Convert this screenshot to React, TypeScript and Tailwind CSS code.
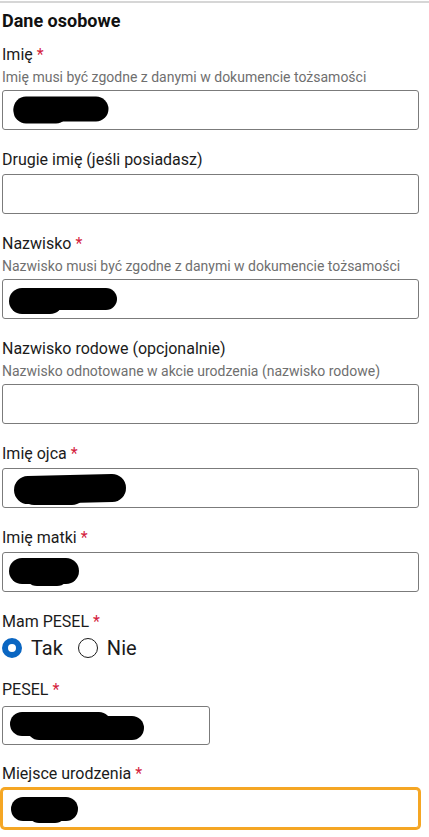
import React from 'react';

type Stroke = [number, number, number, number, number];

interface BlobSpec {
  left: number;
  top: number;
  w: number;
  h: number;
  strokes: Stroke[];
}

// black marker scribbles that hide the entered values
function Blob({ spec, id }: { spec: BlobSpec; id: string }) {
  return (
    <svg
      width={spec.w}
      height={spec.h}
      viewBox={`0 0 ${spec.w} ${spec.h}`}
      style={{ marginLeft: spec.left, marginTop: spec.top }}
      className="block"
    >
      <defs>
        <filter id={id} filterUnits="userSpaceOnUse" x="0" y="0" width={spec.w} height={spec.h}>
          <feGaussianBlur stdDeviation="0.7" />
        </filter>
      </defs>
      <g filter={`url(#${id})`} stroke="#000" strokeLinecap="round" fill="none">
        {spec.strokes.map(([x1, y1, x2, y2, sw], i) => (
          <line key={i} x1={x1} y1={y1} x2={x2} y2={y2} strokeWidth={sw} />
        ))}
      </g>
    </svg>
  );
}

function Label({ text, required }: { text: string; required?: boolean }) {
  return (
    <div className="text-[16px] leading-[20px] text-[#1b1b1b]">
      {text}
      {required && <span className="ml-[4px] text-[#d4213d]">*</span>}
    </div>
  );
}

interface FieldProps {
  label: string;
  required?: boolean;
  hint?: string;
  blob?: BlobSpec;
  id?: string;
}

function Field({ label, required, hint, blob, id }: FieldProps) {
  return (
    <div className="mb-[20px]">
      <Label text={label} required={required} />
      {hint && <div className="mt-[2px] text-[14px] leading-[20px] text-[#6f6f6f]">{hint}</div>}
      <div
        className={`${hint ? 'mt-[3px]' : 'mt-[4px]'} h-[40px] w-full rounded-[3px] border border-[#7b7b7b] bg-white`}
      >
        {blob && <Blob spec={blob} id={id ?? 'b'} />}
      </div>
    </div>
  );
}

const blobs: Record<string, BlobSpec> = {
  imie: { left: 9, top: 4, w: 98, h: 30, strokes: [[14, 14, 84, 14, 25], [14, 16, 44, 16, 25]] },
  nazwisko: { left: 5, top: 6, w: 112, h: 30, strokes: [[14, 15, 42, 15, 26], [30, 13, 98, 13, 22]] },
  ojciec: { left: 9, top: 4, w: 116, h: 34, strokes: [[16, 17, 100, 15, 28], [22, 19, 60, 19, 26]] },
  matka: { left: 4, top: 3, w: 74, h: 32, strokes: [[15, 15, 59, 15, 26], [30, 18, 50, 18, 24]] },
  pesel: { left: 6, top: 3, w: 138, h: 33, strokes: [[13, 14, 90, 14, 24], [30, 18, 123, 18, 24]] },
  miejsce: { left: 6, top: 6, w: 72, h: 29, strokes: [[14, 13, 57, 13, 24], [30, 16, 46, 16, 22]] },
};

export default function App() {
  return (
    <div className="min-h-screen bg-white font-['Roboto','Liberation_Sans',sans-serif]">
      <div className="pt-[1px]">
        <div className="h-[2px] bg-[#d6d6d6]" />
      </div>
      <div className="pl-[2px] pr-[10px]">
        <h2 className="mt-[6px] text-[18px] font-bold leading-[24px] text-[#111]">Dane osobowe</h2>

        <div className="mt-[12px]">
          <Field
            label="Imię"
            required
            hint="Imię musi być zgodne z danymi w dokumencie tożsamości"
            blob={blobs.imie}
            id="b1"
          />
          <Field label="Drugie imię (jeśli posiadasz)" />
          <Field
            label="Nazwisko"
            required
            hint="Nazwisko musi być zgodne z danymi w dokumencie tożsamości"
            blob={blobs.nazwisko}
            id="b2"
          />
          <Field
            label="Nazwisko rodowe (opcjonalnie)"
            hint="Nazwisko odnotowane w akcie urodzenia (nazwisko rodowe)"
          />
          <Field label="Imię ojca" required blob={blobs.ojciec} id="b3" />
          <Field label="Imię matki" required blob={blobs.matka} id="b4" />

          <div className="mb-[20px]">
            <Label text="Mam PESEL" required />
            <div className="mt-[4px] flex h-[24px] items-center">
              <span className="h-[20px] w-[20px] rounded-full border-[6px] border-[#0a66c2] bg-white" />
              <span className="ml-[9px] text-[20px] leading-[24px] text-[#1b1b1b]">Tak</span>
              <span className="ml-[15px] h-[20px] w-[20px] rounded-full border-[1.5px] border-[#1b1b1b] bg-white" />
              <span className="ml-[9px] text-[20px] leading-[24px] text-[#1b1b1b]">Nie</span>
            </div>
          </div>

          <div className="mb-[19px]">
            <Label text="PESEL" required />
            <div className="mt-[6px] h-[39px] w-[208px] rounded-[3px] border border-[#7b7b7b] bg-white">
              <Blob spec={blobs.pesel} id="b5" />
            </div>
          </div>

          <div>
            <Label text="Miejsce urodzenia" required />
            <div className="mt-[5px] h-[39px] w-full rounded-[3px] border border-[#f5a623] bg-white ring-2 ring-[#f5a623]">
              <Blob spec={blobs.miejsce} id="b6" />
            </div>
          </div>
        </div>
      </div>
    </div>
  );
}
